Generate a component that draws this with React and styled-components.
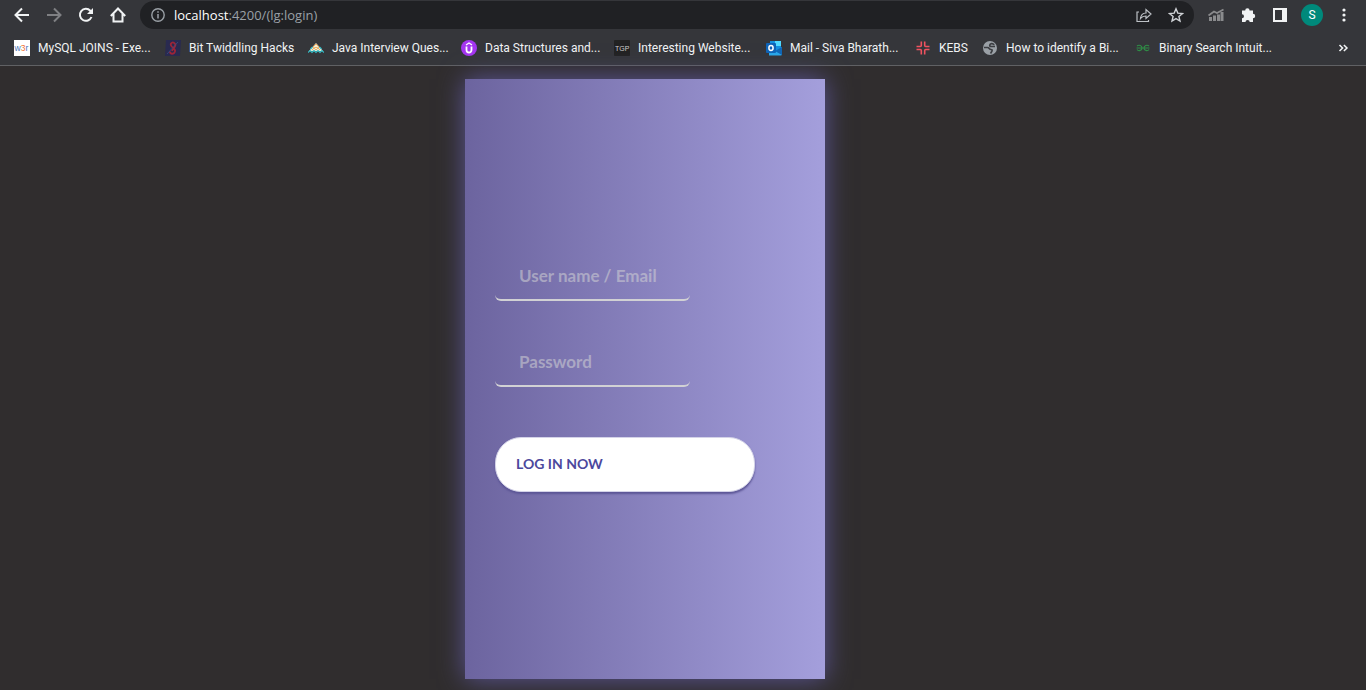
import React from "react";
import styled, { createGlobalStyle } from "styled-components";

const GlobalStyle = createGlobalStyle`
  * { box-sizing: border-box; }
  body { margin: 0; background: #302d2e; }
`;

const Page = styled.div`
  min-height: 100vh;
  display: flex;
  flex-direction: column;
  overflow: hidden;
`;

const Browser = styled.header`
  background: #35363a;
  border-bottom: 1px solid #606164;
  font-family: Roboto, "Noto Sans", sans-serif;
`;

const Toolbar = styled.div`
  display: flex;
  align-items: center;
  height: 30px;
  padding: 0 14px;
  gap: 16px;
`;

const IconButton = styled.button`
  display: flex;
  flex: none;
  padding: 0;
  border: 0;
  background: none;
  color: ${(p) => p.$color || "#f1f3f4"};
`;

const AddressBar = styled.div`
  flex: 1;
  min-width: 0;
  display: flex;
  align-items: center;
  gap: 16px;
  height: 28px;
  margin: 0 -2px;
  padding: 0 10px;
  border-radius: 14px;
  background: #202124;
`;

const Address = styled.div`
  flex: 1;
  margin-left: -8px;
  font-family: "Open Sans", sans-serif;
  font-size: 13px;
  line-height: 20px;
  color: #9aa0a6;
  white-space: nowrap;
`;

const Host = styled.span`
  color: #ffffff;
`;

const Avatar = styled.button`
  width: 22px;
  height: 22px;
  margin: 0 -3px;
  padding: 0;
  border: 0;
  border-radius: 50%;
  background: #00897b;
  color: #ffffff;
  font: 12px/22px Roboto, sans-serif;
`;

const Bookmarks = styled.nav`
  display: flex;
  align-items: center;
  height: 35px;
  padding: 0 16px 0 14px;
  gap: 16px;
`;

const Bookmark = styled.a`
  display: flex;
  align-items: center;
  gap: 8px;
  color: #f1f3f4;
  text-decoration: none;
`;

const BookmarkLabel = styled.span`
  width: ${(p) => p.$width}px;
  font-size: 12px;
  line-height: 16px;
  white-space: nowrap;
`;

const More = styled(IconButton)`
  margin-left: auto;
`;

const Content = styled.main`
  flex: 1;
  display: flex;
  justify-content: center;
  align-items: flex-start;
  padding: 13px 76px 11px 0;
`;

const Screen = styled.section`
  width: 360px;
  min-height: 600px;
  padding: 156px 30px 30px;
  background: linear-gradient(90deg, #6c649f, #a49fdc);
  box-shadow: 0 0 24px #5c5696;
`;

const Form = styled.form`
  display: flex;
  flex-direction: column;
  width: 260px;
  font-family: Lato, sans-serif;
`;

const Field = styled.div`
  padding: 20px 0;
`;

const Input = styled.input`
  display: block;
  width: 75%;
  height: 46px;
  padding: 8px 10px 12px 24px;
  border: none;
  border-bottom: 2px solid #d1d1d4;
  border-radius: 6px;
  outline: none;
  background: none;
  color: #ffffff;
  font-family: inherit;
  font-size: 17px;
  font-weight: 700;
  &::placeholder { color: #d1d1d4; opacity: 0.55; }
`;

const Submit = styled.button`
  height: 55px;
  margin-top: 30px;
  padding: 0 20px 2px;
  border: 1px solid #d4d3e8;
  border-radius: 26px;
  background: #ffffff;
  box-shadow: 0 2px 2px #5c5696;
  color: #4c489d;
  font-family: inherit;
  font-size: 14px;
  font-weight: 700;
  text-align: left;
  text-transform: uppercase;
`;

const Svg = ({ size = 16, children }) => (
  <svg width={size} height={size} viewBox="0 0 16 16" fill="none" stroke="currentColor" strokeWidth="2" aria-hidden="true">
    {children}
  </svg>
);

const icons = {
  w3r: (
    <Svg><rect width="16" height="16" fill="#fff" stroke="none" />
      <text x="0.5" y="11" fontSize="8.5" fontFamily="Liberation Sans" fill="#4b76b8" stroke="none">w<tspan fill="#ef7234">3</tspan>r</text></Svg>
  ),
  bit: (
    <Svg><path d="M1 0h15l-1 16H0z" fill="#292a50" stroke="none" />
      <path d="M10 4C8 1 5 3 6 5.500s5 3 4 6-5 3-5 0M10 4c2 2-2 4-3 7" stroke="#9c2438" strokeWidth="1.800" />
      <path d="M2 14L13 2" stroke="#39508d" strokeWidth="0.7" /></Svg>
  ),
  java: (
    <Svg><path d="M8 3l7 8H1z" fill="#e8edda" stroke="none" />
      <path d="M5 7l3-3 3 3-2 1-1-1-1 1zM4 10l2-2 2 2 2-2 2 2" stroke="#f1ae63" strokeWidth="1" />
      <path d="M0 12.500l2-2 2 2 2-2 2 2 2-2 2 2 2-2 2 2M2.500 9l2-2M13.500 9l-2-2" stroke="#35b9c4" strokeWidth="1.2" /></Svg>
  ),
  udemy: (
    <Svg><circle cx="8" cy="8" r="8" fill="#a435f0" stroke="none" />
      <path d="M5.5 6.5V10a2.5 2.5 0 0 0 5 0V6.5" stroke="#fff" strokeWidth="1.8" />
      <path d="M5 5l3-2 3 2" stroke="#fff" strokeWidth="1.3" /></Svg>
  ),
  tgp: (
    <Svg><rect width="16" height="16" rx="1" fill="#222" stroke="none" />
      <text x="1" y="11" fontSize="7" fontFamily="Liberation Sans" fill="#d0d0d0" stroke="none">TGP</text></Svg>
  ),
  mail: (
    <Svg><g stroke="none"><path d="M4 1h11v10H4z" fill="#1490df" /><path d="M9 1h6v5H9z" fill="#50d9ff" />
      <path d="M3 8l6 4 7-5v7a1.5 1.5 0 0 1-1.5 1.5H3z" fill="#28a8ea" /><path d="M16 7v8L9 11z" fill="#1066b5" />
      <rect y="3" width="10" height="10" rx="1" fill="#0f64b7" /></g>
      <ellipse cx="5" cy="8" rx="2.1" ry="2.4" stroke="#fff" strokeWidth="1.5" /></Svg>
  ),
  kebs: (
    <Svg><path d="M6.300 1.500v4q0 1-1 1H1.500M9.700 1.500v4q0 1 1 1h3.800M6.300 14.500v-4q0-1-1-1H1.500M9.700 14.500v-4q0-1 1-1h3.800" stroke="#f0525f" strokeWidth="1.6" /></Svg>
  ),
  globe: (
    <Svg><circle cx="8" cy="8" r="7" fill="#9aa0a6" stroke="none" />
      <path d="M2 7.500h3.500c2 0 1.500 2 3.500 2s1 2-.5 4M12.500 4.500c-1.500 0-1-1-3-.8S7 6.500 9 6.500h4" stroke="#3c3e42" strokeWidth="1.7" /></Svg>
  ),
  gfg: (
    <Svg><path d="M2 6C4 4.500 7 5.500 7 8s-3.500 3.500-5 1.500M1.500 8h13M14 6C12 4.500 9 5.500 9 8s3.500 3.500 5 1.500" stroke="#2f8d46" strokeWidth="1.2" /></Svg>
  ),
};

const bookmarks = [
  { icon: "w3r", label: "MySQL JOINS - Exe...", width: 111 },
  { icon: "bit", label: "Bit Twiddling Hacks", width: 103 },
  { icon: "java", label: "Java Interview Ques...", width: 113 },
  { icon: "udemy", label: "Data Structures and...", width: 113 },
  { icon: "tgp", label: "Interesting Website...", width: 112 },
  { icon: "mail", label: "Mail - Siva Bharath...", width: 109 },
  { icon: "kebs", label: "KEBS", width: 27 },
  { icon: "globe", label: "How to identify a Bi...", width: 113 },
  { icon: "gfg", label: "Binary Search Intuit...", width: 112 },
];

export default function App() {
  return (
    <Page>
      <GlobalStyle />
      <Browser>
        <Toolbar>
          <IconButton aria-label="Back"><Svg><path d="M15 8H2M8 1.5L1.5 8 8 14.5" /></Svg></IconButton>
          <IconButton aria-label="Forward" $color="#7f8083"><Svg><path d="M1 8h13M8 1.5L14.5 8 8 14.5" /></Svg></IconButton>
          <IconButton aria-label="Reload"><Svg><path d="M13.5 10A6 6 0 1 1 12.3 3.7L14 5.5" /><path d="M15 1v6H9z" fill="currentColor" stroke="none" /></Svg></IconButton>
          <IconButton aria-label="Home"><Svg><path d="M0.8 9L8 1.5 15.2 9M3.5 7v7.500h9V7" /></Svg></IconButton>
          <AddressBar>
            <IconButton aria-label="Site information" $color="#9aa0a6">
              <Svg><circle cx="8" cy="8" r="6.2" strokeWidth="1.4" /><path d="M8 7v4.500M8 4.200v1.600" strokeWidth="1.5" /></Svg>
            </IconButton>
            <Address><Host>localhost</Host>:4200/(lg:login)</Address>
            <IconButton aria-label="Share" $color="#bdc1c6">
              <Svg><path d="M3 5H1v9.500h11.500V13M4.500 11.500c.5-4 2.500-5.500 5.500-5.500V2.500L15 7l-5 4.500V9c-2.500 0-4 .5-5.500 2.500z" strokeWidth="1.2" /></Svg>
            </IconButton>
            <IconButton aria-label="Bookmark this page" $color="#cfd2d6">
              <Svg><path d="M8 1.800l1.800 4.300 4.700.4-3.600 3 1.100 4.600L8 11.600l-4 2.500 1.100-4.600-3.600-3 4.700-.4z" strokeWidth="1.4" /></Svg>
            </IconButton>
          </AddressBar>
          <IconButton aria-label="Analytics extension" $color="#8a8b8d">
            <Svg><path d="M2.500 14v-4M6.500 14V8.500M10.500 14V7.500M14 14V5" strokeWidth="3" /><path d="M0.500 8.500L6 4.500l3 1.500 6.500-3.500" strokeWidth="1.8" /></Svg>
          </IconButton>
          <IconButton aria-label="Extensions">
            <Svg><path d="M2 3.500h3.200a2.200 2.200 0 0 1 4.400 0H13v3.300a2.200 2.200 0 0 1 0 4.400V15H9.700a2 2 0 0 0-4.200 0H2v-3.800a2 2 0 0 0 0-4z" fill="currentColor" stroke="none" /></Svg>
          </IconButton>
          <IconButton aria-label="Side panel"><Svg><path d="M2 2h12v12H2z" /><path d="M10 2h5v12h-5z" fill="currentColor" stroke="none" /></Svg></IconButton>
          <Avatar aria-label="Profile">S</Avatar>
          <IconButton aria-label="Menu"><Svg><g fill="currentColor" stroke="none"><circle cx="8" cy="3" r="1.6" /><circle cx="8" cy="8" r="1.6" /><circle cx="8" cy="13" r="1.6" /></g></Svg></IconButton>
        </Toolbar>
        <Bookmarks aria-label="Bookmarks">
          {bookmarks.map((b) => (
            <Bookmark key={b.icon} href="#">
              {icons[b.icon]}
              <BookmarkLabel $width={b.width}>{b.label}</BookmarkLabel>
            </Bookmark>
          ))}
          <More aria-label="More bookmarks"><Svg size={14}><path d="M4 4.500L7.500 8 4 11.500M9 4.500L12.500 8 9 11.500" strokeWidth="1.8" /></Svg></More>
        </Bookmarks>
      </Browser>
      <Content>
        <Screen>
          <Form onSubmit={(e) => e.preventDefault()}>
            <Field><Input type="text" aria-label="User name / Email" placeholder="User name / Email" /></Field>
            <Field><Input type="password" aria-label="Password" placeholder="Password" /></Field>
            <Submit type="submit">Log In Now</Submit>
          </Form>
        </Screen>
      </Content>
    </Page>
  );
}
